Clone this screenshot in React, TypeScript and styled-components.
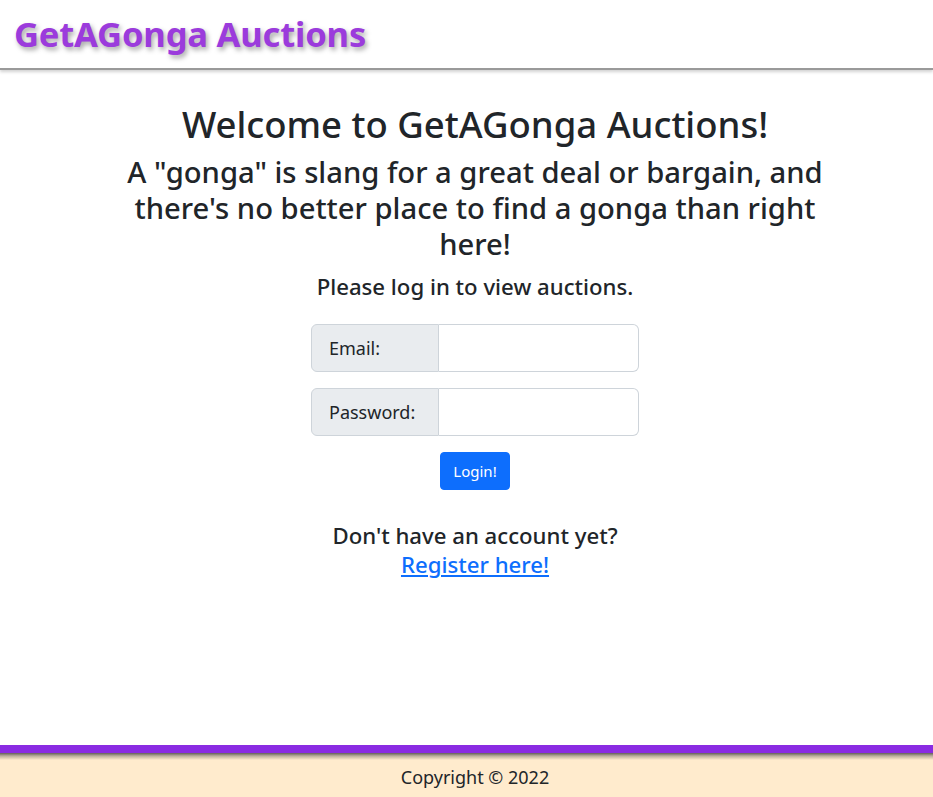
import React from "react";
import styled, { createGlobalStyle } from "styled-components";

const Global = createGlobalStyle`
  html, body { margin: 0; padding: 0; }
  body {
    font-family: "Noto Sans", "Open Sans", sans-serif;
    color: #212529;
    background: #fff;
  }
  * { box-sizing: border-box; }
`;

const Page = styled.div`
  min-height: 100vh;
  display: flex;
  flex-direction: column;
`;

const Header = styled.header`
  height: 70px;
  border-bottom: 2px solid #9a9a9a;
  box-shadow: 0 2px 3px rgba(0, 0, 0, 0.18);
  display: flex;
  align-items: center;
  padding: 0 14px 2px;
`;

const Brand = styled.div`
  font-size: 34.6px;
  font-weight: 700;
  color: #9b3bdc;
  text-shadow: 2px 3px 5px rgba(0, 0, 0, 0.35);
  letter-spacing: -0.2px;
`;

const Main = styled.main`
  flex: 1;
  display: flex;
  flex-direction: column;
  align-items: center;
  text-align: center;
  padding: 33px 0 0 17px;
`;

const Title = styled.h1`
  margin: 0;
  font-size: 36.5px;
  font-weight: 500;
  line-height: 1.2;
`;

const Sub = styled.h2`
  margin: 7px 0 0;
  font-size: 29.2px;
  font-weight: 500;
  line-height: 36px;
  max-width: 712px;
`;

const Prompt = styled.h4`
  margin: 12px 0 0;
  font-size: 22.2px;
  font-weight: 500;
  line-height: 1.2;
`;

const Form = styled.form`
  margin-top: 24px;
  display: flex;
  flex-direction: column;
  align-items: center;
  gap: 16px;
`;

const Group = styled.div`
  display: flex;
  width: 328px;
  height: 48px;
`;

const Label = styled.span`
  width: 128px;
  display: flex;
  align-items: center;
  padding: 0 17px;
  font-size: 18px;
  background: #e9ecef;
  border: 1px solid #ced4da;
  border-radius: 6px 0 0 6px;
  color: #212529;
`;

const Input = styled.input`
  flex: 1;
  min-width: 0;
  border: 1px solid #ced4da;
  border-left: none;
  border-radius: 0 6px 6px 0;
  font-size: 18px;
  padding: 0 12px;
  outline: none;
`;

const Button = styled.button`
  background: #0d6efd;
  color: #fff;
  border: 1px solid #0d6efd;
  border-radius: 4px;
  height: 38px;
  padding: 0 12px;
  font-family: inherit;
  font-size: 15px;
  cursor: pointer;
`;

const Signup = styled.div`
  margin-top: 31px;
  font-size: 22.2px;
  font-weight: 500;
  line-height: 29px;
  display: flex;
  flex-direction: column;
  align-items: center;
`;

const RegLink = styled.a`
  color: #0d6efd;
  text-decoration: underline;
  font-weight: 500;
`;

const Footer = styled.footer`
  border-top: 8px solid #8a2be2;
  background: linear-gradient(
      to bottom,
      rgba(60, 60, 60, 0.8) 0px,
      rgba(60, 60, 60, 0.35) 3px,
      rgba(60, 60, 60, 0) 7px
    ),
    #ffebcd;
  height: 52px;
  display: flex;
  align-items: center;
  justify-content: center;
  font-size: 18px;
  padding: 4px 0 0 17px;
`;

export default function App() {
  return (
    <>
      <Global />
      <Page>
        <Header>
          <Brand>GetAGonga Auctions</Brand>
        </Header>
        <Main>
          <Title>Welcome to GetAGonga Auctions!</Title>
          <Sub>
            A "gonga" is slang for a great deal or bargain, and there's no better
            place to find a gonga than right here!
          </Sub>
          <Prompt>Please log in to view auctions.</Prompt>
          <Form onSubmit={(e) => e.preventDefault()}>
            <Group>
              <Label>Email:</Label>
              <Input type="email" />
            </Group>
            <Group>
              <Label>Password:</Label>
              <Input type="password" />
            </Group>
            <Button type="submit">Login!</Button>
          </Form>
          <Signup>
            <span>Don't have an account yet?</span>
            <RegLink href="#">Register here!</RegLink>
          </Signup>
        </Main>
        <Footer>Copyright © 2022</Footer>
      </Page>
    </>
  );
}
